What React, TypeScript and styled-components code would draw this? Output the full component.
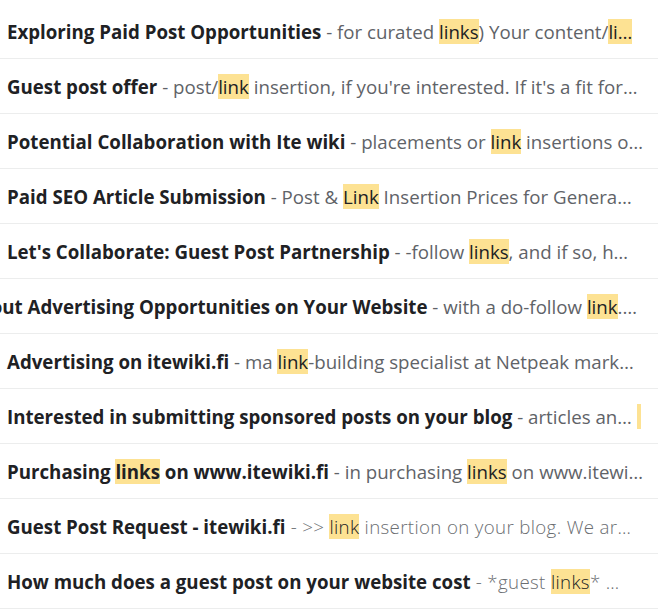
import styled, { createGlobalStyle } from "styled-components";

const GlobalStyle = createGlobalStyle`
  body {
    margin: 0;
    background: #ffffff;
    font-family: "Open Sans", "Roboto", sans-serif;
  }
`;

type Part = { text: string; hit?: boolean };
type Mail = {
  subject: Part[];
  snippet: Part[];
  shift?: number;
  light?: boolean;
};

const mails: Mail[] = [
  {
    subject: [{ text: "Exploring Paid Post Opportunities" }],
    snippet: [
      { text: " - for curated " },
      { text: "links", hit: true },
      { text: ") Your content/" },
      { text: "li…", hit: true },
    ],
  },
  {
    subject: [{ text: "Guest post offer" }],
    snippet: [
      { text: " - post/" },
      { text: "link", hit: true },
      { text: " insertion, if you're interested. If it's a fit for…" },
    ],
  },
  {
    subject: [{ text: "Potential Collaboration with Ite wiki" }],
    snippet: [
      { text: " - placements or " },
      { text: "link", hit: true },
      { text: " insertions o…" },
    ],
  },
  {
    subject: [{ text: "Paid SEO Article Submission" }],
    snippet: [
      { text: " - Post & " },
      { text: "Link", hit: true },
      { text: " Insertion Prices for Genera…" },
    ],
  },
  {
    subject: [{ text: "Let's Collaborate: Guest Post Partnership" }],
    snippet: [
      { text: " - -follow " },
      { text: "links", hit: true },
      { text: ", and if so, h…" },
    ],
  },
  {
    // row is scrolled sideways, so the start of the subject is hidden
    subject: [{ text: "About Advertising Opportunities on Your Website" }],
    snippet: [
      { text: " - with a do-follow " },
      { text: "link", hit: true },
      { text: ".…" },
    ],
    shift: -41,
  },
  {
    subject: [{ text: "Advertising on itewiki.fi" }],
    snippet: [
      { text: " - ma " },
      { text: "link", hit: true },
      { text: "-building specialist at Netpeak mark…" },
    ],
  },
  {
    subject: [{ text: "Interested in submitting sponsored posts on your blog" }],
    snippet: [{ text: " - articles an… " }, { text: " ", hit: true }],
  },
  {
    subject: [
      { text: "Purchasing " },
      { text: "links", hit: true },
      { text: " on www.itewiki.fi" },
    ],
    snippet: [
      { text: " - in purchasing " },
      { text: "links", hit: true },
      { text: " on www.itewi…" },
    ],
  },
  {
    subject: [{ text: "Guest Post Request - itewiki.fi" }],
    snippet: [
      { text: " - >> " },
      { text: "link", hit: true },
      { text: " insertion on your blog. We ar…" },
    ],
    light: true,
  },
  {
    subject: [{ text: "How much does a guest post on your website cost" }],
    snippet: [
      { text: " - *guest " },
      { text: "links", hit: true },
      { text: "* …" },
    ],
    light: true,
  },
];

const List = styled.div`
  display: flex;
  flex-direction: column;
  padding-top: 4px;
  width: 658px;
  overflow: hidden;
`;

const Row = styled.div`
  display: flex;
  align-items: center;
  height: 54px;
  border-bottom: 1px solid #eceded;
  padding-left: 7px;
  overflow: hidden;
`;

const Line = styled.div<{ $shift: number }>`
  white-space: pre;
  font-size: 18.7px;
  line-height: 25px;
  margin-left: ${(p) => p.$shift}px;
`;

const Subject = styled.span`
  font-weight: 700;
  color: #202124;
`;

const Snippet = styled.span<{ $light: boolean }>`
  font-weight: ${(p) => (p.$light ? 300 : 400)};
  letter-spacing: ${(p) => (p.$light ? "0.35px" : "0")};
  color: ${(p) => (p.$light ? "#6b6e72" : "#5f6368")};
`;

const Hit = styled.span`
  background: #fde293;
  color: #202124;
`;

const renderParts = (parts: Part[]) =>
  parts.map((p, i) => (p.hit ? <Hit key={i}>{p.text}</Hit> : <span key={i}>{p.text}</span>));

export default function App() {
  return (
    <>
      <GlobalStyle />
      <List>
        {mails.map((m, i) => (
          <Row key={i}>
            <Line $shift={m.shift ?? 0}>
              <Subject>{renderParts(m.subject)}</Subject>
              <Snippet $light={!!m.light}>{renderParts(m.snippet)}</Snippet>
            </Line>
          </Row>
        ))}
      </List>
    </>
  );
}
